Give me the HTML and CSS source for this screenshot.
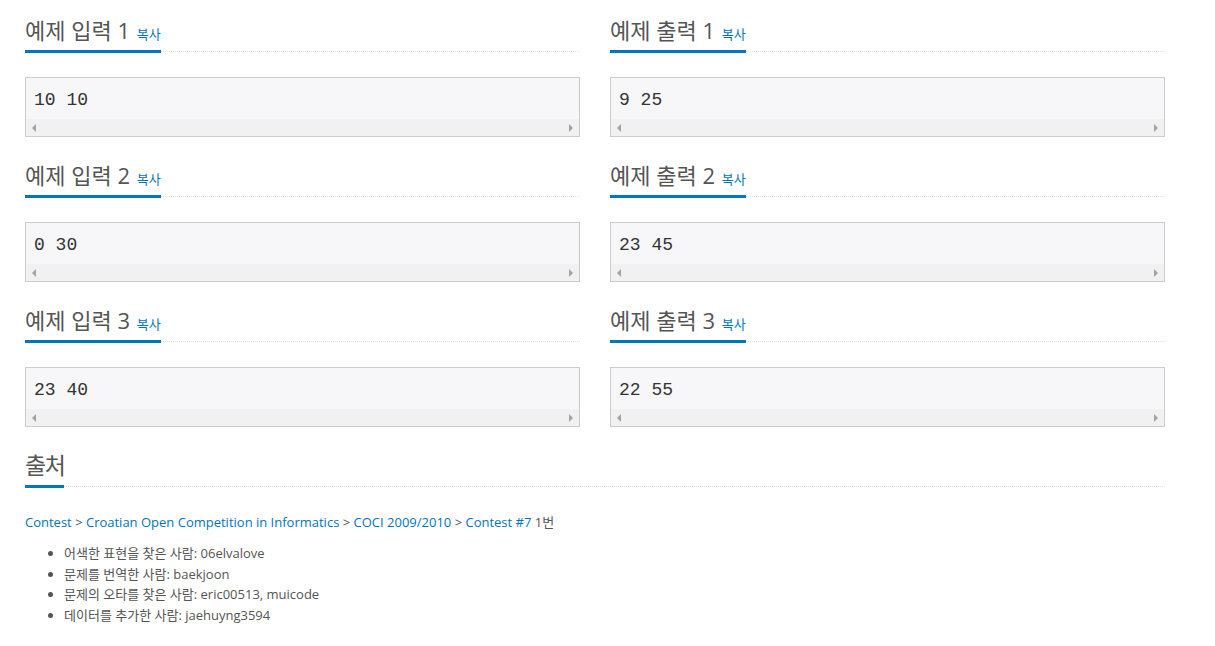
FILE: index.html
```html
<!DOCTYPE html>
<html lang="ko">
<head>
    <meta charset="UTF-8">
    <title>예제</title>
    <link rel="stylesheet" href="styles.css">
</head>
<body>
    <div class="container">
        <div class="row">
            <div class="col">
                <section class="sample">
                    <div class="headline"><h2>예제 입력 1 <span class="copy">복사</span></h2></div>
                    <div class="pre"><pre>10 10</pre><div class="scroll"><i class="arrow left"></i><i class="arrow right"></i></div></div>
                </section>
            </div>
            <div class="col">
                <section class="sample">
                    <div class="headline"><h2>예제 출력 1 <span class="copy">복사</span></h2></div>
                    <div class="pre"><pre>9 25</pre><div class="scroll"><i class="arrow left"></i><i class="arrow right"></i></div></div>
                </section>
            </div>
        </div>
        <div class="row">
            <div class="col">
                <section class="sample">
                    <div class="headline"><h2>예제 입력 2 <span class="copy">복사</span></h2></div>
                    <div class="pre"><pre>0 30</pre><div class="scroll"><i class="arrow left"></i><i class="arrow right"></i></div></div>
                </section>
            </div>
            <div class="col">
                <section class="sample">
                    <div class="headline"><h2>예제 출력 2 <span class="copy">복사</span></h2></div>
                    <div class="pre"><pre>23 45</pre><div class="scroll"><i class="arrow left"></i><i class="arrow right"></i></div></div>
                </section>
            </div>
        </div>
        <div class="row">
            <div class="col">
                <section class="sample">
                    <div class="headline"><h2>예제 입력 3 <span class="copy">복사</span></h2></div>
                    <div class="pre"><pre>23 40</pre><div class="scroll"><i class="arrow left"></i><i class="arrow right"></i></div></div>
                </section>
            </div>
            <div class="col">
                <section class="sample">
                    <div class="headline"><h2>예제 출력 3 <span class="copy">복사</span></h2></div>
                    <div class="pre"><pre>22 55</pre><div class="scroll"><i class="arrow left"></i><i class="arrow right"></i></div></div>
                </section>
            </div>
        </div>
        <section class="source">
            <div class="headline"><h2 class="big">출처</h2></div>
            <p class="crumbs"><a href="#">Contest</a> &gt; <a href="#">Croatian Open Competition in Informatics</a> &gt; <a href="#">COCI 2009/2010</a> &gt; <a href="#">Contest #7</a> 1번</p>
            <ul>
                <li>어색한 표현을 찾은 사람: 06elvalove</li>
                <li>문제를 번역한 사람: baekjoon</li>
                <li>문제의 오타를 찾은 사람: eric00513, muicode</li>
                <li>데이터를 추가한 사람: jaehuyng3594</li>
            </ul>
        </section>
    </div>
</body>
</html>
```

FILE: styles.css
```css
body {
    margin: 0;
    font-family: "Open Sans", "Noto Sans CJK KR", sans-serif;
    color: #555;
    background: #fff;
}
.container {
    padding: 15px 0 0 25px;
}
.row {
    display: flex;
    gap: 30px;
}
.col {
    width: 555px;
    flex: none;
}
.sample {
    margin-bottom: 23px;
}
.headline {
    display: flex;
    align-items: flex-start;
    border-bottom: 1px dotted #e4e4e4;
    margin-bottom: 25px;
}
.headline h2 {
    margin: 0 0 -2px;
    font-size: 22px;
    font-weight: normal;
    line-height: 30px;
    height: 30px;
    padding-bottom: 5px;
    border-bottom: 3px solid #0076c0;
    color: #555;
    white-space: nowrap;
}
.headline h2.big {
    font-size: 23px;
    letter-spacing: -1.5px;
}
.copy {
    font-size: 13px;
    color: #0076c0;
    letter-spacing: 0;
    margin-left: 1px;
}
.pre {
    border: 1px solid #ccc;
    background: #f7f7f9;
}
.pre pre {
    margin: 0;
    padding: 10px 8px 6px;
    font-family: "Liberation Mono", "DejaVu Sans Mono", monospace;
    font-size: 18px;
    line-height: 25px;
    color: #333;
}
.scroll {
    height: 17px;
    background: #f1f1f1;
    display: flex;
    justify-content: space-between;
    align-items: center;
    padding: 0 6px;
}
.arrow {
    width: 0;
    height: 0;
    border-top: 4px solid transparent;
    border-bottom: 4px solid transparent;
}
.arrow.left {
    border-right: 4px solid #a3a3a3;
}
.arrow.right {
    border-left: 4px solid #a3a3a3;
}
.source {
    width: 1140px;
    font-size: 13px;
}
.crumbs {
    margin: 25px 0 0;
    line-height: 20px;
}
.crumbs a {
    color: #0076c0;
    text-decoration: none;
}
.source ul {
    margin: 11px 0 0;
    padding-left: 39px;
    line-height: 20.6px;
}
```
